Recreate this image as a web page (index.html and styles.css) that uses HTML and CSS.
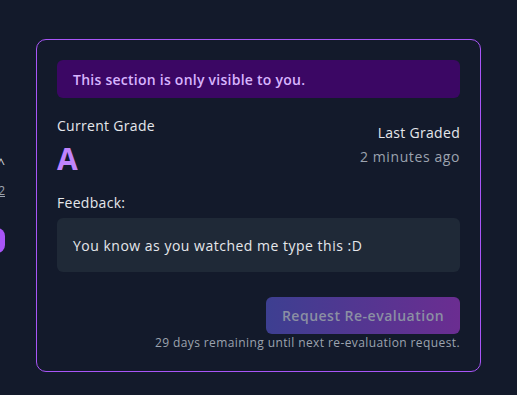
FILE: index.html
```html
<!DOCTYPE html>
<html>
<head>
  <meta charset="UTF-8">
  <title>Grade</title>
  <link rel="stylesheet" href="styles.css">
</head>
<body>
  <div class="side">
    <span class="side-caret">^</span>
    <span class="side-link">2</span>
    <span class="side-pill"></span>
  </div>
  <div class="card">
    <div class="notice">This section is only visible to you.</div>
    <div class="grade-row">
      <div class="grade">
        <div class="label">Current Grade</div>
        <div class="grade-value">A</div>
      </div>
      <div class="graded">
        <div class="label">Last Graded</div>
        <div class="muted">2 minutes ago</div>
      </div>
    </div>
    <div class="label feedback-label">Feedback:</div>
    <div class="feedback">You know as you watched me type this :D</div>
    <div class="actions">
      <button class="btn" disabled>Request Re-evaluation</button>
      <div class="hint">29 days remaining until next re-evaluation request.</div>
    </div>
  </div>
</body>
</html>
```

FILE: styles.css
```css
body {
  margin: 0;
  font-family: 'Open Sans', 'DejaVu Sans', sans-serif;
  background-color: #131a2b;
  color: #e5e7eb;
  position: relative;
  height: 395px;
  overflow: hidden;
}

.side {
  position: absolute;
  left: -30px;
  top: 150px;
  width: 35px;
}

.side-caret {
  position: absolute;
  right: 0;
  top: 4px;
  color: #d1d5db;
  font-size: 14px;
}

.side-link {
  position: absolute;
  right: 0;
  top: 32px;
  color: #9ca3af;
  font-size: 12px;
  text-decoration: underline;
}

.side-pill {
  position: absolute;
  right: 0;
  top: 78px;
  width: 30px;
  height: 25px;
  border-radius: 8px;
  background-color: #a855f7;
}

.card {
  margin: 39px 0 0 36px;
  width: 445px;
  box-sizing: border-box;
  border: 1px solid #a855f7;
  border-radius: 10px;
  padding: 20px;
  display: flex;
  flex-direction: column;
}

.notice {
  background-color: #3b0764;
  color: #d8b4fe;
  border-radius: 6px;
  height: 38px;
  padding: 0 16px;
  display: flex;
  align-items: center;
  font-size: 14px;
  font-weight: 600;
  letter-spacing: 0.25px;
}

.grade-row {
  display: flex;
  justify-content: space-between;
  align-items: flex-end;
  margin-top: 18px;
}

.label {
  font-size: 14px;
  line-height: 20px;
  color: #e5e7eb;
  letter-spacing: 0.3px;
}

.grade-value {
  font-size: 30px;
  font-weight: 700;
  color: #c084fc;
  line-height: 36px;
  margin-top: 5px;
}

.graded {
  text-align: right;
  margin-bottom: 10px;
}

.muted {
  font-size: 14px;
  line-height: 20px;
  color: #9ca3af;
  margin-top: 4px;
  letter-spacing: 0.6px;
}

.feedback-label {
  margin-top: 16px;
}

.feedback {
  margin-top: 5px;
  background-color: #1f2937;
  border-radius: 6px;
  height: 54px;
  box-sizing: border-box;
  padding: 0 16px;
  display: flex;
  align-items: center;
  font-size: 14px;
  color: #e5e7eb;
  letter-spacing: 0.5px;
}

.actions {
  margin-top: 25px;
  display: flex;
  flex-direction: column;
  align-items: flex-end;
}

.btn {
  width: 194px;
  height: 37px;
  border: none;
  border-radius: 6px;
  background: linear-gradient(to right, #3d3f91, #6b2d91);
  color: #8b8fa3;
  font-family: inherit;
  font-size: 14px;
  font-weight: 600;
  letter-spacing: 0.5px;
  padding: 0;
}

.hint {
  margin-top: 1px;
  font-size: 12px;
  line-height: 16px;
  color: #9ca3af;
  letter-spacing: 0.4px;
}
```
